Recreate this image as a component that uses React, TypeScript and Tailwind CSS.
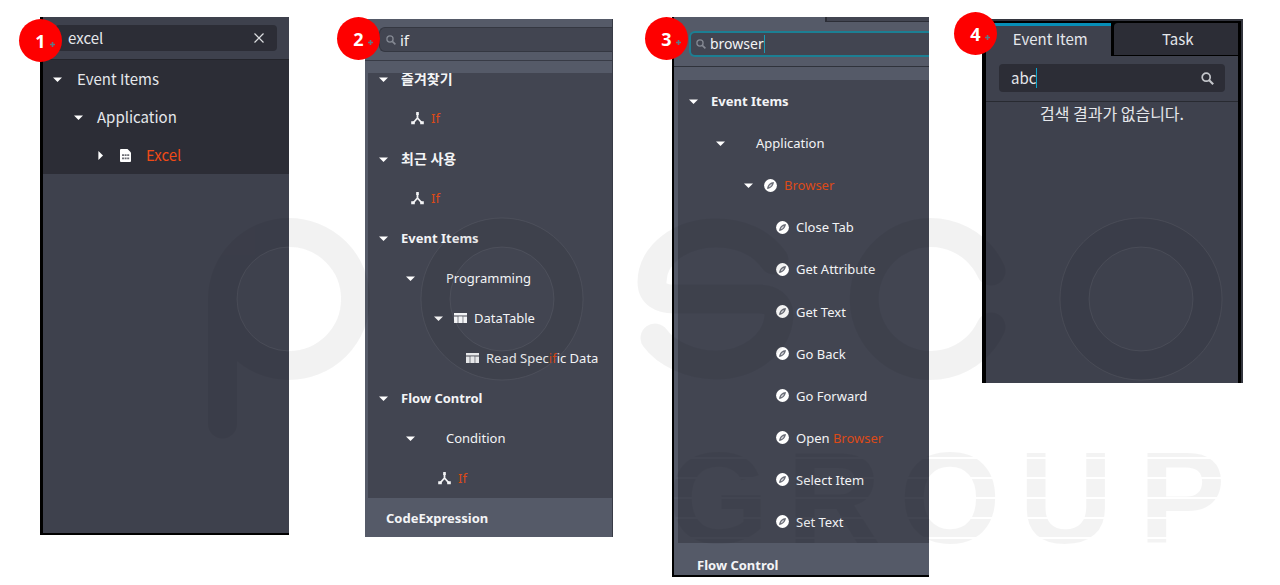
import type { ReactNode } from "react"
import clsx from "clsx"

const Caret = ({ closed = false }: { closed?: boolean }) => (
  <svg viewBox="0 0 9 9" className={clsx("size-[9px] shrink-0 fill-white", closed && "-rotate-90")}>
    <path d="M0 2.4h9L4.5 7z" />
  </svg>
)

const ForkIcon = () => (
  <svg viewBox="0 0 13 13" className="size-[13px] shrink-0 text-gray-100">
    <path d="M6.5 1.5V6L2.5 10.5M6.5 6l4 4.5" fill="none" stroke="currentColor" strokeWidth="1.8" />
    <path d="M5.2 0h2.6v3H5.2zM.2 9.2h3.6v3H.2zM9.2 9.2h3.6v3H9.2z" fill="currentColor" />
  </svg>
)

const TableIcon = () => (
  <svg viewBox="0 0 13 12" className="h-3 w-[13px] shrink-0 fill-gray-100">
    <path d="M0 1h13v2.4H0zM0 4.4h3.6V11H0zM4.7 4.4h3.6V11H4.7zM9.4 4.4H13V11H9.4z" />
    <path d="M3.6 4.4h6V11h-6z" opacity=".55" />
  </svg>
)

const CompassIcon = () => (
  <svg viewBox="0 0 13 13" className="size-[13px] shrink-0">
    <circle cx="6.5" cy="6.5" r="6.4" fill="#fff" />
    <path d="M9.9 3.1C9.8 6.8 6.8 9.8 3.1 9.9 3.2 6.2 6.2 3.2 9.9 3.1z" fill="#6a6d77" />
    <path d="M7.6 5.4 5.2 7.8" stroke="#d5d7dc" strokeWidth="1.3" />
  </svg>
)

const SheetIcon = () => (
  <svg viewBox="0 0 11 13" className="h-[13px] w-[11px] shrink-0">
    <path d="M1 0h6.5L11 3.5V12a1 1 0 0 1-1 1H1a1 1 0 0 1-1-1V1a1 1 0 0 1 1-1z" fill="#fff" />
    <path d="M2 5.2h2V7H2zM4.6 5.2h2V7h-2zM7.2 5.2h2V7h-2zM2 8.4h2v1.8H2zM4.6 8.4h2v1.8h-2zM7.2 8.4h2v1.8h-2z" fill="#6c6d74" />
  </svg>
)

const SearchIcon = ({ className }: { className?: string }) => (
  <svg viewBox="0 0 13 13" className={clsx("shrink-0", className)} fill="none" stroke="currentColor">
    <circle cx="5.2" cy="5.2" r="4" strokeWidth="1.7" />
    <path d="m8.2 8.2 4 4" strokeWidth="2.1" />
  </svg>
)

const Badge = ({ n, className }: { n: number; className: string }) => (
  <div
    className={clsx(
      "absolute z-20 flex size-[43px] items-center justify-center rounded-full bg-[#fe0000] font-['Open_Sans',sans-serif] text-lg font-bold text-white",
      className
    )}
  >
    {n}
    <svg viewBox="0 0 5 5" className="absolute left-[31px] top-[23px] size-[5px]">
      <path d="M2.5 0v5M0 2.5h5" stroke="#5d7a86" strokeWidth="1.6" />
    </svg>
  </div>
)

const Hit = ({ children }: { children: ReactNode }) => <span className="text-[#dc4a18]">{children}</span>

type RowProps = { children: ReactNode; icon?: ReactNode; className: string; caret?: boolean; closed?: boolean }

function Row({ children, icon, className, caret = true, closed }: RowProps) {
  return (
    <li className="flex min-h-0 flex-1">
      <button type="button" className={clsx("flex w-full items-center whitespace-nowrap text-left", className)}>
        {caret && <Caret closed={closed} />}
        {icon}
        <span>{children}</span>
      </button>
    </li>
  )
}

// indent + gap for each depth of the grey trees
const root = "gap-[13px] pl-[11px] font-bold"
const rootKr = "gap-[13px] pl-[11px] pt-[2px] font-bold text-sm"
const branch = "gap-[31px] pl-[38px]"
const group = "gap-[7px] pl-[66px] [&>svg:first-child]:mr-1"
const leaf = "gap-[7px] pl-[98px]"

const treeFont = "font-['Noto_Sans','Noto_Sans_CJK_KR',sans-serif] text-[13px] leading-5 text-gray-100 [font-variant-ligatures:none]"
const krFont = "font-['Noto_Sans_CJK_KR',sans-serif] text-base leading-6 text-gray-200"

function ExcelPanel() {
  return (
    <section className={clsx("relative mt-[17px] mr-[76px] flex h-[518px] min-w-0 flex-[1_1_249px] flex-col border-b-2 border-l-[3px] border-black bg-[#3e414d]", krFont)}>
      <Badge n={1} className="top-[2px] -left-6" />
      <div className="flex h-[43px] border-b border-[#24252c] pt-2 pr-3 pl-3">
        <label className="flex h-[26px] w-full items-center rounded bg-[#2c2d36] pr-3 pl-[13px]">
          <span className="sr-only">Search event items</span>
          <input type="text" defaultValue="excel" className="min-w-0 flex-1 bg-transparent text-[15px] outline-none" />
          <button type="button" aria-label="Clear">
            <svg viewBox="0 0 12 12" className="size-3">
              <path d="m1.5 1.5 9 9m0-9-9 9" stroke="#dcdde0" strokeWidth="1.2" />
            </svg>
          </button>
        </label>
      </div>
      <ul className="flex h-[114px] flex-col bg-[#2c2d36] text-[15px]">
        <Row className="gap-[15px] pl-[10px]">Event Items</Row>
        <Row className="gap-[14px] pl-[31px]">Application</Row>
        <Row className="gap-[15px] pl-[53px]" closed icon={<SheetIcon />}>
          <span className="text-[#f04a16]">Excel</span>
        </Row>
      </ul>
    </section>
  )
}

function IfPanel() {
  return (
    <section className={clsx("relative mt-[19px] mr-[59px] flex min-w-0 flex-[1_1_248px] flex-col border-r border-[#383b46] bg-[#555a68]", treeFont)}>
      <Badge n={2} className="-top-[2px] -left-7" />
      <div className="flex h-[42px] border-b border-[#383b46] pt-2 pl-[14px]">
        <label className="flex h-[25px] w-full items-center gap-1 rounded-l-md border border-r-0 border-[#343741] bg-[#424551] pl-[6px]">
          <SearchIcon className="size-[10px] text-[#858993]" />
          <span className="sr-only">Search event items</span>
          <input type="text" defaultValue="if" className="min-w-0 flex-1 bg-transparent text-[15px] outline-none" />
        </label>
      </div>
      <div className="mt-3 ml-[3px] h-[425px] overflow-hidden bg-[#424551]">
        <ul className="-mt-[15px] flex h-[440px] flex-col">
          <Row className={rootKr}>즐겨찾기</Row>
          <Row className="gap-[7px] pl-[43px]" caret={false} icon={<ForkIcon />}><Hit>If</Hit></Row>
          <Row className={rootKr}>최근 사용</Row>
          <Row className="gap-[7px] pl-[43px]" caret={false} icon={<ForkIcon />}><Hit>If</Hit></Row>
          <Row className={root}>Event Items</Row>
          <Row className={branch}>Programming</Row>
          <Row className={group} icon={<TableIcon />}>DataTable</Row>
          <Row className={leaf} caret={false} icon={<TableIcon />}>Read Spec<Hit>if</Hit>ic Data</Row>
          <Row className={root}>Flow Control</Row>
          <Row className={branch}>Condition</Row>
          <Row className="gap-[7px] pl-[70px]" caret={false} icon={<ForkIcon />}><Hit>If</Hit></Row>
        </ul>
      </div>
      <div className="flex h-[39px] items-center pl-[21px] font-bold">CodeExpression</div>
    </section>
  )
}

const browserItems: ReactNode[] = [
  "Close Tab",
  "Get Attribute",
  "Get Text",
  "Go Back",
  "Go Forward",
  <>Open <Hit>Browser</Hit></>,
  "Select Item",
  "Set Text",
]

function BrowserPanel() {
  return (
    <section className={clsx("relative mt-[17px] mr-[53px] flex min-w-0 flex-[1_1_257px] flex-col border-b-2 border-l-2 border-black bg-[#555a68]", treeFont)}>
      <Badge n={3} className="top-0 -left-[29px]" />
      <div className="ml-auto h-[5px] w-[104px] border-b border-l-2 border-[#2c2e37] bg-[#424551]" />
      <div className="flex h-[45px] border-b border-[#2f323b] pt-[9px] pl-[15px]">
        <label className="flex h-[26px] w-full items-center gap-1 rounded-l-md border-2 border-r-0 border-[#1c7f93] bg-[#424551] pl-[5px]">
          <SearchIcon className="size-[10px] text-[#858993]" />
          <span className="sr-only">Search event items</span>
          <span className="relative flex min-w-0 flex-1">
            <input type="text" defaultValue="browser" className="w-full bg-transparent text-sm outline-none" />
            <i className="absolute top-[1px] left-[54px] h-[18px] w-px bg-[#1c9ab3]" />
          </span>
        </label>
      </div>
      <ul className="mt-[13px] ml-1 flex h-[463px] flex-col bg-[#424551]">
        <Row className={root}>Event Items</Row>
        <Row className={branch}>Application</Row>
        <Row className={group} icon={<CompassIcon />}><Hit>Browser</Hit></Row>
        {browserItems.map((item, i) => (
          <Row key={i} className={leaf} caret={false} icon={<CompassIcon />}>
            {item}
          </Row>
        ))}
      </ul>
      <div className="flex h-[32px] items-end pl-[23px] font-bold">Flow Control</div>
    </section>
  )
}

function EmptyPanel() {
  return (
    <section className={clsx("relative mt-[19px] flex h-[364px] min-w-0 flex-[1_1_261px] flex-col border-r-2 border-[#33353e] bg-black pr-[3px] pl-1", krFont)}>
      <Badge n={4} className="-top-[7px] -left-7" />
      <div className="-mx-1 h-[2px] bg-[#33353e]" />
      <div role="tablist" className="mt-[2px] flex h-[33px] shrink-0 text-[15px]">
        <button type="button" role="tab" aria-selected="true" className="flex-1 border-t-[3px] border-[#078fb8] bg-[#3e414d] pb-1 pl-1">
          Event Item
        </button>
        <button type="button" role="tab" aria-selected="false" className="mb-px ml-[3px] flex-1 rounded-tl bg-[#2c2d36] pl-1">
          Task
        </button>
      </div>
      <div className="flex-1 bg-[#3e414d]">
        <div className="border-b border-[#282a31] px-[13px] pt-2 pb-[9px]">
          <label className="flex h-7 items-center rounded bg-[#2c2d36] pr-[11px] pl-3">
            <span className="sr-only">Search event items</span>
            <span className="relative flex min-w-0 flex-1">
              <input type="text" defaultValue="abc" className="w-full bg-transparent text-[15px] outline-none" />
              <i className="absolute top-[2px] left-[25px] h-5 w-px bg-[#0aa5cf]" />
            </span>
            <SearchIcon className="size-[13px] text-[#c4c6cb]" />
          </label>
        </div>
        <p className="text-center leading-[22px]">검색 결과가 없습니다.</p>
      </div>
    </section>
  )
}

const Watermark = () => (
  <div aria-hidden="true" className="pointer-events-none absolute inset-0 z-10 overflow-hidden">
    {/* POSCO logo */}
    <svg viewBox="0 0 1280 585" className="absolute top-0 left-0 h-[585px] w-[1280px]" fill="none">
      <g stroke="#000" strokeWidth="29" opacity=".048" strokeLinecap="round">
        <circle cx="289" cy="299" r="66.5" />
        <path d="M222.5 299V424" />
        <circle cx="502" cy="299" r="66.5" />
        <path d="M774 260C761 242 740 233 716 233c-36 0-64 22-64 49 0 12 9 17 22 17h84c14 0 21 6 21 17-2 29-31 49-63 49-26 0-50-12-61-27" />
        <path d="M991 271A66.5 66.5 0 1 0 991 327" />
        <circle cx="1141" cy="299" r="66.5" />
      </g>
      <g stroke="#fff" opacity=".06">
        <circle cx="289" cy="299" r="52" />
        <circle cx="502" cy="299" r="52" />
        <circle cx="502" cy="299" r="81" />
        <circle cx="1141" cy="299" r="52" />
        <circle cx="1141" cy="299" r="81" />
      </g>
    </svg>
    <div className="absolute top-[433px] left-[660px] flex bg-[repeating-linear-gradient(to_bottom,transparent_0_2px,#0000000c_2px_20px)] bg-[position:0_4px] bg-clip-text font-['Liberation_Sans',sans-serif] text-[130px] leading-[130px] font-bold text-transparent">
      {"GROUP".split("").map((c, i) => (
        <span key={i} className="w-[116px] text-center">{c}</span>
      ))}
    </div>
  </div>
)

export default function App() {
  return (
    <main className="relative min-h-screen overflow-hidden bg-white">
      <div className="flex items-start pr-[37px] pl-10">
        <ExcelPanel />
        <IfPanel />
        <BrowserPanel />
        <EmptyPanel />
      </div>
      <Watermark />
    </main>
  )
}
